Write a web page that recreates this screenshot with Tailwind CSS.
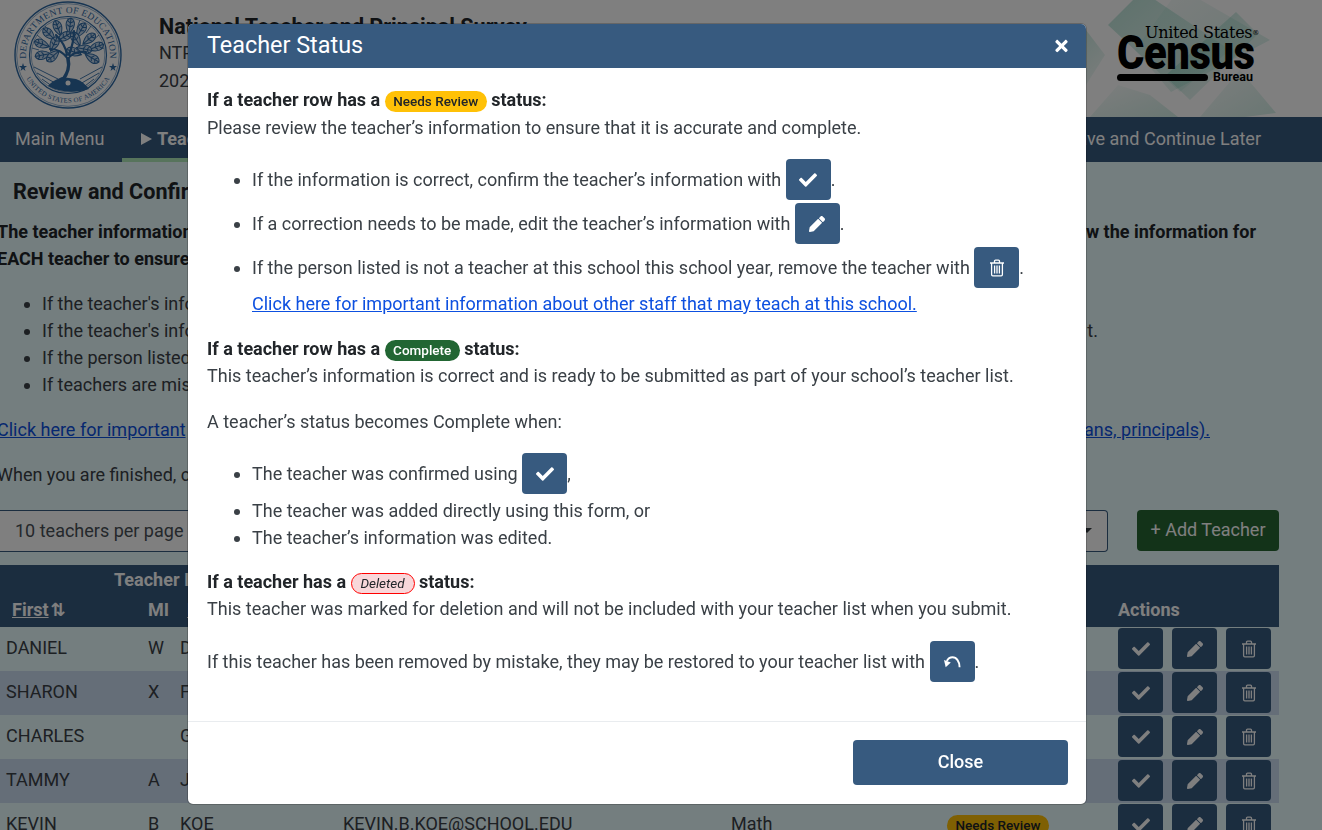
<!DOCTYPE html>
<html lang="en">
  <head>
    <meta charset="UTF-8" />
    <meta name="viewport" content="width=device-width, initial-scale=1.0" />
    <title>National Teacher and Principal Survey</title>
    <script src="https://cdn.jsdelivr.net/npm/@tailwindcss/browser@4"></script>
  </head>

  <body class="h-screen overflow-hidden bg-[#e8fcff] font-[Roboto,sans-serif] text-[18px] leading-[27px] text-[#3a4046]">
    <!-- icon set -->
    <svg class="hidden" aria-hidden="true">
      <symbol id="i-check" viewBox="0 0 512 512">
        <path fill="currentColor" d="M173.9 439.4l-166.4-166.4c-10-10-10-26.2 0-36.2l36.2-36.2c10-10 26.2-10 36.2 0L192 312.7 432.1 72.6c10-10 26.2-10 36.2 0l36.2 36.2c10 10 10 26.2 0 36.2l-294.4 294.4c-10 10-26.2 10-36.2 0z" />
      </symbol>
      <symbol id="i-pencil" viewBox="0 0 512 512">
        <path fill="currentColor" d="M497.9 142.1l-46.1 46.1c-4.7 4.7-12.3 4.7-17 0l-111-111c-4.7-4.7-4.7-12.3 0-17l46.1-46.1c18.7-18.7 49.1-18.7 67.9 0l60.1 60.1c18.8 18.7 18.8 49.1 0 67.9zM284.2 99.8L21.6 362.4.4 483.9c-2.9 16.4 11.4 30.6 27.8 27.8l121.5-21.3 262.6-262.6c4.7-4.7 4.7-12.3 0-17l-111-111c-4.8-4.7-12.4-4.7-17.1 0z" />
      </symbol>
      <symbol id="i-trash" viewBox="0 0 16 18">
        <path fill="none" stroke="currentColor" stroke-width="1.3" d="M1 4h14M5.500 4V2.200c0-.6.4-1 1-1h3c.6 0 1 .4 1 1V4M2.600 4v11.600c0 .7.5 1.200 1.200 1.200h8.400c.7 0 1.200-.5 1.200-1.200V4M5.600 6.500v8M8 6.500v8M10.400 6.500v8" />
      </symbol>
      <symbol id="i-undo" viewBox="0 0 18 13">
        <path fill="none" stroke="currentColor" stroke-width="2" d="M16.500 12.500c0-6-3.200-10.500-7.500-10.500-2.800 0-4.800 1.600-6 4" />
        <path fill="currentColor" d="M0 4.800l7.200 2.700-5.400 5.100z" />
      </symbol>
      <symbol id="i-times" viewBox="0 0 352 512">
        <path fill="currentColor" d="M242.700 256l100.100-100.100c12.300-12.300 12.300-32.200 0-44.500l-22.200-22.200c-12.300-12.300-32.200-12.300-44.500 0L176 189.300 75.900 89.200c-12.300-12.300-32.200-12.300-44.500 0L9.200 111.400c-12.300 12.300-12.300 32.200 0 44.500L109.300 256 9.200 356.100c-12.300 12.300-12.300 32.200 0 44.500l22.200 22.200c12.300 12.300 32.200 12.300 44.500 0L176 322.700l100.100 100.100c12.300 12.300 32.200 12.300 44.500 0l22.200-22.200c12.300-12.300 12.300-32.200 0-44.500L242.700 256z" />
      </symbol>
    </svg>

    <!-- ========== Header ========== -->
    <header class="relative flex h-[117px] items-center overflow-hidden bg-white">
      <!-- background diamonds -->
      <svg class="absolute left-[1030px] top-0 h-[117px] w-[292px]" viewBox="0 0 292 117" aria-hidden="true">
        <defs>
          <linearGradient id="fade-a" x1="0" y1="0" x2="1" y2="1">
            <stop offset="0" stop-color="#46b596" stop-opacity="0.38" />
            <stop offset="1" stop-color="#46b596" stop-opacity="0.03" />
          </linearGradient>
          <linearGradient id="fade-b" x1="1" y1="1" x2="0" y2="0">
            <stop offset="0" stop-color="#46b596" stop-opacity="0.24" />
            <stop offset="1" stop-color="#46b596" stop-opacity="0.02" />
          </linearGradient>
        </defs>
        <path fill="url(#fade-a)" d="M78 25L112 -9 200 50 150 92z" />
        <path fill="url(#fade-b)" d="M150 -12L240 40 141 92 105 50z" />
        <path fill="url(#fade-a)" d="M56 30L75 55 56 85 20 55z" />
        <path fill="url(#fade-a)" d="M206 12L228 34 160 100 135 76z" />
        <path fill="url(#fade-b)" d="M120 95L148 117 60 117 88 85z" />
        <path fill="url(#fade-b)" d="M210 70L246 113 215 117 170 117z" />
      </svg>

      <!-- Seal -->
      <svg class="relative ml-[14px] h-[108px] w-[108px] -translate-y-[4px] text-[#2f6aa5]" viewBox="0 0 108 108">
        <defs>
          <path id="seal-top" d="M14.500 68.400A42 42 0 1 1 93.500 68.400" />
          <path id="seal-bottom" d="M9 70.400A48 48 0 0 0 99 70.400" />
          <g id="leaf" fill="#bcd2e8" stroke="currentColor" stroke-width="1">
            <path d="M0 -8C5 -6 6 0 0 8C-6 0 -5 -6 0 -8ZM0 -8V8M0 -3L3 -5M0 -3L-3 -5M0 1L3 -1M0 1L-3 -1" />
          </g>
        </defs>
        <circle cx="54" cy="54" r="53" fill="none" stroke="currentColor" stroke-width="1.400" />
        <circle cx="54" cy="54" r="51.300" fill="none" stroke="currentColor" stroke-width="0.500" />
        <circle cx="54" cy="54" r="38.500" fill="none" stroke="currentColor" stroke-width="1.200" />
        <circle cx="54" cy="54" r="36.800" fill="none" stroke="currentColor" stroke-width="0.500" />
        <text fill="currentColor" font-family="Liberation Serif" font-size="9.400" letter-spacing="0.300"><textPath href="#seal-top" startOffset="50%" text-anchor="middle">DEPARTMENT OF EDUCATION</textPath></text>
        <text fill="currentColor" font-family="Liberation Serif" font-size="6.800" letter-spacing="0.300"><textPath href="#seal-bottom" startOffset="50%" text-anchor="middle">UNITED STATES OF AMERICA</textPath></text>
        <path fill="currentColor" d="M9 62l1 3 3 0-2.500 2 1 3-2.500-2-2.500 2 1-3-2.500-2 3 0zM99 62l1 3 3 0-2.500 2 1 3-2.500-2-2.500 2 1-3-2.500-2 3 0z" />
        <!-- rays -->
        <path fill="none" stroke="currentColor" stroke-width="0.800" d="M54 17V26M42 19L45 27M66 19L63 27M31 25L36 32M77 25L72 32M23 34L29 39M85 34L79 39M18 47L25 49M90 47L83 49" />
        <!-- sweeping lines under the tree -->
        <path fill="none" stroke="currentColor" stroke-width="0.900" d="M20 66L44 78M23 72L43 83M28 78L42 88M88 66L66 78M85 72L66 83M80 78L67 88" />
        <!-- leaves -->
        <use href="#leaf" transform="translate(44 27) rotate(-20)" />
        <use href="#leaf" transform="translate(56 25) rotate(8)" />
        <use href="#leaf" transform="translate(67 29) rotate(30)" />
        <use href="#leaf" transform="translate(35 33) rotate(-45)" />
        <use href="#leaf" transform="translate(50 36) rotate(60)" />
        <use href="#leaf" transform="translate(62 38) rotate(-30)" />
        <use href="#leaf" transform="translate(75 38) rotate(50)" />
        <use href="#leaf" transform="translate(28 43) rotate(-70)" />
        <use href="#leaf" transform="translate(40 43) rotate(25)" />
        <use href="#leaf" transform="translate(82 46) rotate(70)" />
        <use href="#leaf" transform="translate(70 48) rotate(100)" />
        <use href="#leaf" transform="translate(29 54) rotate(-100)" />
        <use href="#leaf" transform="translate(39 55) rotate(-130)" />
        <use href="#leaf" transform="translate(60 51) rotate(-70)" />
        <use href="#leaf" transform="translate(78 57) rotate(120)" />
        <!-- trunk and branches -->
        <path fill="none" stroke="currentColor" stroke-width="3.600" stroke-linecap="round" d="M48 80C54 72 56 66 54 58" />
        <path fill="none" stroke="currentColor" stroke-width="2.200" stroke-linecap="round" d="M54 58C50 52 44 48 36 48M54 58C58 52 64 50 72 51M53 54C52 46 48 40 42 34M55 54C58 46 60 40 60 30" />
        <path fill="currentColor" d="M34 85C38 80 42 79 48 76L62 78C68 80 72 84 75 88 62 92 46 92 34 85z" />
        <circle cx="54" cy="82" r="2.500" fill="#fff" />
      </svg>

      <div class="relative ml-[37px] -translate-y-[4px]">
        <h1 class="whitespace-nowrap text-[21.500px] font-bold leading-[24px] text-[#212529]">National Teacher and Principal Survey</h1>
        <p class="leading-[28px]">NTPS-5</p>
        <p class="leading-[28px]">2023-24</p>
      </div>

      <!-- Census logo -->
      <div class="absolute left-[1117px] top-[24px] h-[62px] w-[145px] text-black">
        <p class="ml-[28px] whitespace-nowrap font-['DejaVu_Serif'] text-[16px] leading-[18px] tracking-[-0.3px]">United States<sup class="text-[7px]">®</sup></p>
        <p class="-mt-[12px] origin-left scale-x-[0.87] text-[48px] font-black leading-[46px] tracking-[-0.5px]">Census</p>
        <div class="-mt-[4px] flex items-center gap-[5px]">
          <span class="h-[7px] w-[91px] rounded-full bg-black"></span>
          <span class="text-[12.500px] font-bold leading-[10px]">Bureau</span>
        </div>
      </div>
    </header>

    <!-- ========== Nav ========== -->
    <nav class="flex h-[45px] items-stretch bg-[#375a7f] text-white">
      <a class="flex w-[122px] items-center pb-[2px] pl-[15px]">Main Menu</a>
      <a class="flex w-[300px] items-center gap-[5px] border-b-4 border-[#aee8b8] pl-[19px] pt-[2px] font-bold">
        <span class="h-0 w-0 border-y-[6px] border-l-[11px] border-y-transparent border-l-white"></span>
        Teacher List
      </a>
      <a class="ml-auto flex items-center pb-[2px] pr-[61px]">Save and Continue Later</a>
    </nav>

    <!-- ========== Main Content ========== -->
    <main>
      <h2 class="ml-[13px] mt-[16px] text-[21.600px] font-bold leading-[28px] text-[#212529]">Review and Confirm Teachers</h2>

      <div class="ml-[-3px] mt-[12px] w-[1259px] font-bold text-[#212529]">
        <p class="flex justify-between"><span>The teacher information</span><span>Please review the information for</span></p>
        <p>EACH teacher to ensure</p>
      </div>

      <ul class="mt-[18px] list-disc pl-[42px]">
        <li>If the teacher's information</li>
        <li class="w-[1056px]">If the teacher's information<span class="float-right">t.</span></li>
        <li>If the person listed</li>
        <li>If teachers are missing</li>
      </ul>

      <p class="ml-[-3px] mt-[18px] flex w-[1213px] justify-between text-[#0d50e0] underline">
        <span>Click here for important</span><span>librarians, principals).</span>
      </p>

      <p class="ml-[-3px] mt-[18px]">When you are finished, click</p>

      <!-- Toolbar -->
      <div class="mt-[22px] flex items-start">
        <div class="flex h-[42px] w-[1108px] items-center justify-between rounded-r-[4px] border border-l-0 border-[#375a7f] bg-white pb-[2px] pl-[15px] pr-[15px] text-[#495057]">
          <span>10 teachers per page</span>
          <span class="h-0 w-0 border-x-[5px] border-t-[5px] border-x-transparent border-t-[#343a40]"></span>
        </div>
        <button class="ml-[29px] flex h-[41px] w-[142px] items-center justify-center rounded-[4px] bg-[#276633] pb-[2px] text-white">+ Add Teacher</button>
      </div>

      <!-- Teacher table -->
      <table class="mt-[13px] w-[1279px] table-fixed border-collapse">
        <colgroup>
          <col class="w-[142px]" /><col class="w-[32px]" /><col class="w-[163px]" /><col class="w-[388px]" /><col class="w-[216px]" /><col class="w-[171px]" /><col class="w-[167px]" />
        </colgroup>
        <thead class="bg-[#375a7f] font-bold text-white">
          <tr class="h-[31px]">
            <th colspan="3" class="pb-[2px] pl-[114px] text-left">Teacher Information</th>
            <th colspan="4"></th>
          </tr>
          <tr class="h-[31px]">
            <th class="pb-[4px] pl-[12px] text-left"><span class="underline">First</span><span class="ml-[2px] font-['DejaVu_Sans'] text-[18px] leading-none">⇅</span></th>
            <th class="px-[6px] pb-[4px] text-left">MI</th>
            <th class="pb-[4px] pl-[13px] text-left underline">Last</th>
            <th class="px-[6px] pb-[4px] text-left underline">Email</th>
            <th class="px-[6px] pb-[4px] text-left underline">Subject</th>
            <th class="px-[6px] pb-[4px] text-left underline">Status</th>
            <th class="px-[6px] pb-[4px] text-left">Actions</th>
          </tr>
        </thead>
        <tbody class="[&>tr>td:not(:last-child)]:pb-[3px]">
          <tr class="h-[44px]">
            <td class="px-[6px]">DANIEL</td><td class="px-[6px]">W</td><td class="px-[6px]">DOE</td><td class="px-[6px]">DANIEL.W.DOE@SCHOOL.EDU</td><td class="px-[6px]">English</td>
            <td class="px-[6px]"><span class="inline-flex h-[21px] w-[102px] items-center justify-center rounded-full bg-[#ffc107] text-[13.500px] font-medium text-[#212529]">Needs Review</span></td>
            <td class="px-[6px] pt-[1px] align-top"><div class="flex gap-[9px]">
              <button class="flex h-[41px] w-[45px] items-center justify-center rounded-[4px] bg-[#375a7f] text-white"><svg class="h-[18px] w-[18px]"><use href="#i-check" /></svg></button>
              <button class="flex h-[41px] w-[45px] items-center justify-center rounded-[4px] bg-[#375a7f] text-white"><svg class="h-[16px] w-[16px]"><use href="#i-pencil" /></svg></button>
              <button class="flex h-[41px] w-[45px] items-center justify-center rounded-[4px] bg-[#375a7f] text-white"><svg class="h-[18px] w-[16px]"><use href="#i-trash" /></svg></button>
            </div></td>
          </tr>
          <tr class="h-[44px] bg-[#cadcf0]">
            <td class="px-[6px]">SHARON</td><td class="px-[6px]">X</td><td class="px-[6px]">FOX</td><td class="px-[6px]">SHARON.X.FOX@SCHOOL.EDU</td><td class="px-[6px]">Science</td>
            <td class="px-[6px]"><span class="inline-flex h-[21px] w-[102px] items-center justify-center rounded-full bg-[#ffc107] text-[13.500px] font-medium text-[#212529]">Needs Review</span></td>
            <td class="px-[6px] pt-[1px] align-top"><div class="flex gap-[9px]">
              <button class="flex h-[41px] w-[45px] items-center justify-center rounded-[4px] bg-[#375a7f] text-white"><svg class="h-[18px] w-[18px]"><use href="#i-check" /></svg></button>
              <button class="flex h-[41px] w-[45px] items-center justify-center rounded-[4px] bg-[#375a7f] text-white"><svg class="h-[16px] w-[16px]"><use href="#i-pencil" /></svg></button>
              <button class="flex h-[41px] w-[45px] items-center justify-center rounded-[4px] bg-[#375a7f] text-white"><svg class="h-[18px] w-[16px]"><use href="#i-trash" /></svg></button>
            </div></td>
          </tr>
          <tr class="h-[44px]">
            <td class="px-[6px]">CHARLES</td><td class="px-[6px]"></td><td class="px-[6px]">GOE</td><td class="px-[6px]">CHARLES.GOE@SCHOOL.EDU</td><td class="px-[6px]">History</td>
            <td class="px-[6px]"><span class="inline-flex h-[21px] w-[102px] items-center justify-center rounded-full bg-[#ffc107] text-[13.500px] font-medium text-[#212529]">Needs Review</span></td>
            <td class="px-[6px] pt-[1px] align-top"><div class="flex gap-[9px]">
              <button class="flex h-[41px] w-[45px] items-center justify-center rounded-[4px] bg-[#375a7f] text-white"><svg class="h-[18px] w-[18px]"><use href="#i-check" /></svg></button>
              <button class="flex h-[41px] w-[45px] items-center justify-center rounded-[4px] bg-[#375a7f] text-white"><svg class="h-[16px] w-[16px]"><use href="#i-pencil" /></svg></button>
              <button class="flex h-[41px] w-[45px] items-center justify-center rounded-[4px] bg-[#375a7f] text-white"><svg class="h-[18px] w-[16px]"><use href="#i-trash" /></svg></button>
            </div></td>
          </tr>
          <tr class="h-[44px] bg-[#cadcf0]">
            <td class="px-[6px]">TAMMY</td><td class="px-[6px]">A</td><td class="px-[6px]">JOE</td><td class="px-[6px]">TAMMY.A.JOE@SCHOOL.EDU</td><td class="px-[6px]">Art</td>
            <td class="px-[6px]"><span class="inline-flex h-[21px] w-[102px] items-center justify-center rounded-full bg-[#ffc107] text-[13.500px] font-medium text-[#212529]">Needs Review</span></td>
            <td class="px-[6px] pt-[1px] align-top"><div class="flex gap-[9px]">
              <button class="flex h-[41px] w-[45px] items-center justify-center rounded-[4px] bg-[#375a7f] text-white"><svg class="h-[18px] w-[18px]"><use href="#i-check" /></svg></button>
              <button class="flex h-[41px] w-[45px] items-center justify-center rounded-[4px] bg-[#375a7f] text-white"><svg class="h-[16px] w-[16px]"><use href="#i-pencil" /></svg></button>
              <button class="flex h-[41px] w-[45px] items-center justify-center rounded-[4px] bg-[#375a7f] text-white"><svg class="h-[18px] w-[16px]"><use href="#i-trash" /></svg></button>
            </div></td>
          </tr>
          <tr class="h-[44px]">
            <td class="px-[6px]">KEVIN</td><td class="px-[6px]">B</td><td class="px-[6px]">KOE</td><td class="px-[6px]">KEVIN.B.KOE@SCHOOL.EDU</td><td class="px-[6px]">Math</td>
            <td class="px-[6px]"><span class="inline-flex h-[21px] w-[102px] items-center justify-center rounded-full bg-[#ffc107] text-[13.500px] font-medium text-[#212529]">Needs Review</span></td>
            <td class="px-[6px] pt-[1px] align-top"><div class="flex gap-[9px]">
              <button class="flex h-[41px] w-[45px] items-center justify-center rounded-[4px] bg-[#375a7f] text-white"><svg class="h-[18px] w-[18px]"><use href="#i-check" /></svg></button>
              <button class="flex h-[41px] w-[45px] items-center justify-center rounded-[4px] bg-[#375a7f] text-white"><svg class="h-[16px] w-[16px]"><use href="#i-pencil" /></svg></button>
              <button class="flex h-[41px] w-[45px] items-center justify-center rounded-[4px] bg-[#375a7f] text-white"><svg class="h-[18px] w-[16px]"><use href="#i-trash" /></svg></button>
            </div></td>
          </tr>
        </tbody>
      </table>
    </main>

    <!-- ========== Modal ========== -->
    <div class="fixed inset-0 bg-black/50"></div>
    <div class="fixed left-[188px] top-[24px] w-[898px] overflow-hidden rounded-[5px] bg-white shadow-[0_0_0_1px_rgba(0,0,0,0.2)]">
      <div class="flex h-[44px] items-center justify-between bg-[#375a7f] px-[19px] text-white">
        <h2 class="pb-[1px] text-[23.400px]">Teacher Status</h2>
        <svg class="mr-[-1px] h-[18px] w-[13px]"><use href="#i-times" /></svg>
      </div>

      <div class="px-[19px] pt-[18px]">
        <p class="font-bold text-[#212529]">If a teacher row has a <span class="inline-flex h-[21px] w-[102px] items-center justify-center rounded-full bg-[#ffc107] text-[13.500px] font-medium">Needs Review</span> status:</p>
        <p class="mt-[1px]">Please review the teacher’s information to ensure that it is accurate and complete.</p>

        <ul class="mt-[18px] list-disc pl-[45px]">
          <li class="mb-[3px]">If the information is correct, confirm the teacher’s information with <span class="inline-block h-[41px] w-[45px] overflow-hidden rounded-[4px] bg-[#375a7f] align-[-14px] text-white"><svg class="mx-auto my-[11.500px] h-[18px] w-[18px]"><use href="#i-check" /></svg></span>.</li>
          <li class="mb-[3px]">If a correction needs to be made, edit the teacher’s information with <span class="inline-block h-[41px] w-[45px] overflow-hidden rounded-[4px] bg-[#375a7f] align-[-14px] text-white"><svg class="mx-auto my-[12.500px] h-[16px] w-[16px]"><use href="#i-pencil" /></svg></span>.</li>
          <li class="mb-[2px]">If the person listed is not a teacher at this school this school year, remove the teacher with <span class="inline-block h-[41px] w-[45px] overflow-hidden rounded-[4px] bg-[#375a7f] align-[-14px] text-white"><svg class="mx-auto my-[11.500px] h-[18px] w-[16px]"><use href="#i-trash" /></svg></span>.</li>
          <li class="list-none"><a class="text-[#0d50e0] underline">Click here for important information about other staff that may teach at this school.</a></li>
        </ul>

        <p class="mt-[18px] font-bold text-[#212529]">If a teacher row has a <span class="inline-flex h-[21px] w-[75px] items-center justify-center rounded-full bg-[#226633] text-[13.500px] font-medium text-white">Complete</span> status:</p>
        <p>This teacher’s information is correct and is ready to be submitted as part of your school’s teacher list.</p>
        <p class="mt-[19px]">A teacher’s status becomes Complete when:</p>

        <ul class="mt-[18px] list-disc pl-[45px]">
          <li class="mb-[3px]">The teacher was confirmed using <span class="inline-block h-[41px] w-[45px] overflow-hidden rounded-[4px] bg-[#375a7f] align-[-14px] text-white"><svg class="mx-auto my-[11.500px] h-[18px] w-[18px]"><use href="#i-check" /></svg></span>,</li>
          <li>The teacher was added directly using this form, or</li>
          <li>The teacher’s information was edited.</li>
        </ul>

        <p class="mt-[17px] font-bold text-[#212529]">If a teacher has a <span class="inline-flex h-[21px] w-[64px] items-center justify-center rounded-full border border-[#f00] bg-[#f8d7da] text-[13.500px] font-normal italic">Deleted</span> status:</p>
        <p>This teacher was marked for deletion and will not be included with your teacher list when you submit.</p>
        <p class="mt-[19px]">If this teacher has been removed by mistake, they may be restored to your teacher list with <span class="inline-block h-[41px] w-[45px] overflow-hidden rounded-[4px] bg-[#375a7f] align-[-14px] text-white"><svg class="mx-auto my-[14px] h-[13px] w-[17px]"><use href="#i-undo" /></svg></span>.</p>
      </div>

      <div class="mt-[39px] flex justify-end border-t border-[#e9ecef] px-[18px] pb-[19px] pt-[18px]">
        <button class="h-[45px] w-[215px] rounded-[4px] bg-[#375a7f] pb-[2px] font-medium text-white">Close</button>
      </div>
    </div>
  </body>
</html>
